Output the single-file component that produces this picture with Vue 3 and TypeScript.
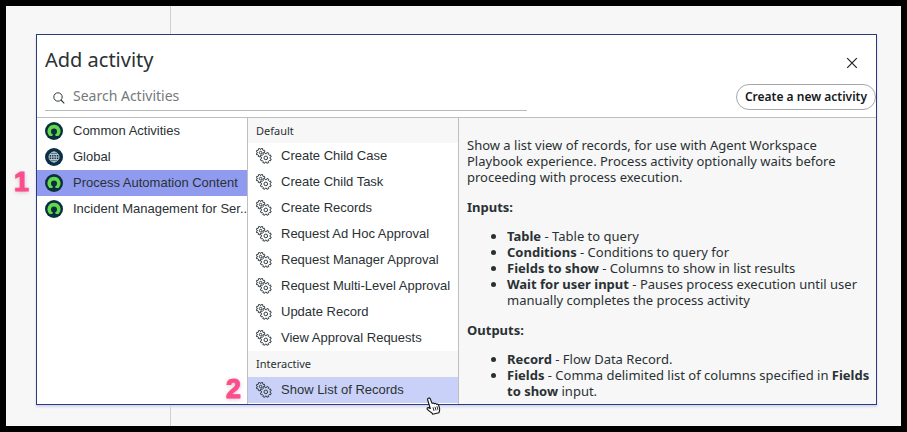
<script setup lang="ts">
import { ref } from 'vue'

interface Source {
  name: string
  icon: 'now' | 'globe'
}

interface Group {
  title: string
  items: string[]
}

interface Detail {
  term: string
  text: string
  ref?: string
  tail?: string
}

const sources: Source[] = [
  { name: 'Common Activities', icon: 'now' },
  { name: 'Global', icon: 'globe' },
  { name: 'Process Automation Content', icon: 'now' },
  { name: 'Incident Management for Ser..', icon: 'now' },
]

const groups: Group[] = [
  {
    title: 'Default',
    items: [
      'Create Child Case',
      'Create Child Task',
      'Create Records',
      'Request Ad Hoc Approval',
      'Request Manager Approval',
      'Request Multi-Level Approval',
      'Update Record',
      'View Approval Requests',
    ],
  },
  { title: 'Interactive', items: ['Show List of Records'] },
]

const inputs: Detail[] = [
  { term: 'Table', text: 'Table to query' },
  { term: 'Conditions', text: 'Conditions to query for' },
  { term: 'Fields to show', text: 'Columns to show in list results' },
  { term: 'Wait for user input', text: 'Pauses process execution until user manually completes the process activity' },
]

const outputs: Detail[] = [
  { term: 'Record', text: 'Flow Data Record.' },
  { term: 'Fields', text: 'Comma delimited list of columns specified in ', ref: 'Fields to show', tail: ' input.' },
]

const query = ref('')
const activeSource = ref('Process Automation Content')
const activeActivity = ref('Show List of Records')

// Outline of a cog wheel with flat teeth, centred on (cx, cy).
function cog(cx: number, cy: number, outer: number, inner: number): string {
  const teeth = 8
  const step = (Math.PI * 2) / teeth
  const at = (r: number, a: number) => `${(cx + r * Math.cos(a)).toFixed(2)} ${(cy + r * Math.sin(a)).toFixed(2)}`
  const parts: string[] = []
  for (let i = 0; i < teeth; i++) {
    const a = i * step + step / 2
    parts.push(
      `${i ? 'L' : 'M'}${at(inner, a - step * 0.32)}`,
      `L${at(outer, a - step * 0.24)}`,
      `L${at(outer, a + step * 0.24)}`,
      `L${at(inner, a + step * 0.32)}`,
    )
  }
  return parts.join(' ') + 'Z'
}

const smallCog = cog(4.6, 4.6, 4.4, 3.3)
const largeCog = cog(9.8, 9.9, 5.5, 4.3)
</script>

<template>
  <main class="stage">
    <section class="dialog" role="dialog" aria-labelledby="dialog-title">
      <header class="head">
        <div class="title-row">
          <h1 id="dialog-title">Add activity</h1>
          <button class="close" type="button" aria-label="Close">
            <svg width="12" height="12" viewBox="0 0 12 12"><path d="M1.2 1.2 10.8 10.8M10.8 1.2 1.2 10.8" fill="none" stroke="#1c2226" stroke-width="1.2" /></svg>
          </button>
        </div>
        <div class="tool-row">
          <label class="search">
            <svg width="12" height="12" viewBox="0 0 12 12" aria-hidden="true"><circle cx="5" cy="5" r="4.2" fill="none" stroke="#30383b" stroke-width="1" /><path d="M8 8 11.3 11.3" stroke="#30383b" stroke-width="1.1" /></svg>
            <input v-model="query" type="text" placeholder="Search Activities" aria-label="Search Activities" />
          </label>
          <button class="create" type="button">Create a new activity</button>
        </div>
      </header>

      <div class="body">
        <nav class="sources">
          <button
            v-for="s in sources"
            :key="s.name"
            type="button"
            class="row source"
            :class="{ active: s.name === activeSource }"
            @click="activeSource = s.name"
          >
            <svg v-if="s.icon === 'now'" width="18" height="18" viewBox="0 0 18 18" aria-hidden="true">
              <circle cx="9" cy="9" r="9" fill="#0b2f3d" />
              <path d="M9 2.700a6.500 6.500 0 0 0-5.600 9.800c.3.600.6 1.200 1.200 1.500.5.200 1 .1 1.500-.1h5.800c.5.200 1 .3 1.500.1.600-.3.900-.9 1.200-1.500A6.500 6.500 0 0 0 9 2.700Z" fill="#62d84e" />
              <circle cx="9" cy="9.400" r="3" fill="#0b2f3d" />
              <path d="M8.200 11.500h1.600l.9 2.500H7.300Z" fill="#0b2f3d" />
            </svg>
            <svg v-else width="18" height="18" viewBox="0 0 18 18" aria-hidden="true">
              <circle cx="9" cy="9" r="9" fill="#0b2f46" />
              <g fill="none" stroke="#c3d0d8" stroke-width="0.9">
                <circle cx="9" cy="9" r="5" />
                <ellipse cx="9" cy="9" rx="2.400" ry="5" />
                <path d="M9 4v10M4 9h10M4.800 6.500h8.400M4.800 11.500h8.400" />
              </g>
            </svg>
            <span>{{ s.name }}</span>
          </button>
        </nav>

        <div class="activities">
          <section v-for="g in groups" :key="g.title">
            <h2>{{ g.title }}</h2>
            <button
              v-for="a in g.items"
              :key="a"
              type="button"
              class="row activity"
              :class="{ active: a === activeActivity }"
              @click="activeActivity = a"
            >
              <svg width="16" height="16" viewBox="0 0 16 16" aria-hidden="true">
                <g stroke="#2f3a3e" stroke-width="1" stroke-linejoin="round">
                  <path :d="smallCog" fill="none" />
                  <circle cx="4.600" cy="4.600" r="1.300" fill="none" />
                  <path class="front" :d="largeCog" />
                  <circle cx="9.800" cy="9.900" r="1.800" fill="none" />
                </g>
              </svg>
              <span>{{ a }}</span>
            </button>
          </section>
        </div>

        <article class="details">
          <p>Show a list view of records, for use with Agent Workspace Playbook experience. Process activity optionally waits before proceeding with process execution.</p>
          <h3>Inputs:</h3>
          <ul>
            <li v-for="d in inputs" :key="d.term"><b>{{ d.term }}</b> - {{ d.text }}</li>
          </ul>
          <h3>Outputs:</h3>
          <ul>
            <li v-for="d in outputs" :key="d.term"><b>{{ d.term }}</b> - {{ d.text }}<b v-if="d.ref">{{ d.ref }}</b>{{ d.tail }}</li>
          </ul>
        </article>
      </div>
    </section>

    <span class="step step-one">1</span>
    <span class="step step-two">2</span>
    <svg class="pointer" width="16" height="18" viewBox="0 0 16 18" aria-hidden="true">
      <path d="M3.200 1.200c.9-.5 1.900 0 2.200.9l1.700 4.300c.6-.6 1.800-.5 2.200.3.700-.5 1.800-.3 2.200.6.900-.4 1.900 0 2.200 1l.9 3c.3 1.200 0 2.200-.3 3.200l-.4 1.300-6.200 1.400-.7-1.300c-1.600-.9-3.300-2-4.700-3.500-.6-.7-.1-1.800.8-1.800.8 0 1.500.4 2.200.9L2.700 3c-.3-.7-.1-1.500.5-1.800Z" fill="#fff" stroke="#111" stroke-width="1.100" stroke-linejoin="round" />
      <path d="m8 10.300 1 3.600M10 9.800l1 3.600M12 9.300l.9 3.500" stroke="#111" stroke-width="0.900" />
    </svg>
  </main>
</template>

<style>
body {
  margin: 0;
}
</style>

<style scoped>
.stage {
  position: relative;
  box-sizing: border-box;
  display: flex;
  min-height: 100vh;
  padding: 28px 24px 21px 30px;
  border: 6px solid #000;
  background: linear-gradient(#cfcfcf, #cfcfcf) 164px 0 / 1px 100% no-repeat #f7f7f7;
  color: #2a3134;
  font-family: "Noto Sans", sans-serif;
}

.dialog {
  flex: 1;
  min-width: 0;
  display: flex;
  flex-direction: column;
  border: 1px solid #2b3a78;
  background: #fff;
  box-shadow: 0 2px 2px #d3d5ef;
}

button {
  margin: 0;
  padding: 0;
  border: 0;
  background: none;
  color: inherit;
  font: inherit;
}

.head {
  border-bottom: 1px solid #bcbec0;
}

.title-row {
  display: flex;
  justify-content: space-between;
  align-items: center;
  height: 48px;
  padding: 2px 18px 0 8px;
  box-sizing: border-box;
}

h1 {
  margin: 0;
  font-size: 20px;
  line-height: 28px;
  font-weight: 400;
}

.close {
  display: flex;
  padding-top: 6px;
}

.tool-row {
  display: flex;
  justify-content: space-between;
  align-items: flex-start;
  height: 34px;
  padding-left: 8px;
}

.search {
  display: flex;
  align-items: center;
  gap: 8px;
  width: 58%;
  height: 28px;
  padding: 0 0 2px 8px;
  box-sizing: border-box;
  border-bottom: 1px solid #b8babb;
}

.search svg {
  margin-top: 4px;
}

.search input {
  flex: 1;
  min-width: 0;
  padding: 0;
  border: 0;
  outline: 0;
  background: none;
  color: inherit;
  font: 14px/20px "Noto Sans", sans-serif;
}

.search input::placeholder {
  color: #747a7c;
  opacity: 1;
}

.create {
  height: 26px;
  margin-top: 1px;
  padding: 0 8px 1px;
  border: 1px solid #a5a8aa;
  border-radius: 13px;
  background: #fff;
  color: #14191c;
  font-size: 12px;
  line-height: 20px;
  font-weight: 600;
}

.body {
  flex: 1;
  display: grid;
  grid-template-columns: 211px 211px minmax(0, 1fr);
}

.sources,
.activities {
  border-right: 1px solid #bcbec0;
  min-width: 0;
}

.row {
  display: flex;
  align-items: center;
  width: 100%;
  height: 26px;
  overflow: hidden;
  white-space: nowrap;
  text-align: left;
  font: 13px/18px "Liberation Sans", Arial, sans-serif;
}

.row svg {
  flex: none;
}

.source {
  gap: 10px;
  padding-left: 8px;
}

.source.active {
  background: #909bf0;
}

.activity {
  gap: 9px;
  padding-left: 8px;
}

.activity.active {
  background: #cad1f8;
}

.front {
  fill: #fff;
}

.active .front {
  fill: #cad1f8;
}

h2 {
  margin: 0;
  padding-left: 8px;
  background: #f7f7f7;
  font-size: 11px;
  line-height: 26px;
  font-weight: 400;
}

section:first-child > h2 {
  line-height: 25px;
}

.details {
  padding: 19px 4px 0 8px;
  background: #f7f7f7;
  font-size: 13px;
  line-height: 16px;
}

.details p,
.details h3,
.details ul {
  margin: 0;
}

.details h3 {
  padding: 14px 0 13px;
  font-size: 13px;
  line-height: 16px;
  font-weight: 700;
}

.details ul {
  padding-left: 40px;
}

.step {
  position: absolute;
  color: #fb4d8b;
  font: 700 27px/30px "Liberation Sans", Arial, sans-serif;
  -webkit-text-stroke: 1px #fb4d8b;
  text-shadow: 0 1px 4px #c9b4bd;
}

.step-one {
  left: 8px;
  top: 161px;
}

.step-two {
  left: 220px;
  top: 368px;
}

.pointer {
  position: absolute;
  left: 419px;
  top: 391px;
}
</style>
